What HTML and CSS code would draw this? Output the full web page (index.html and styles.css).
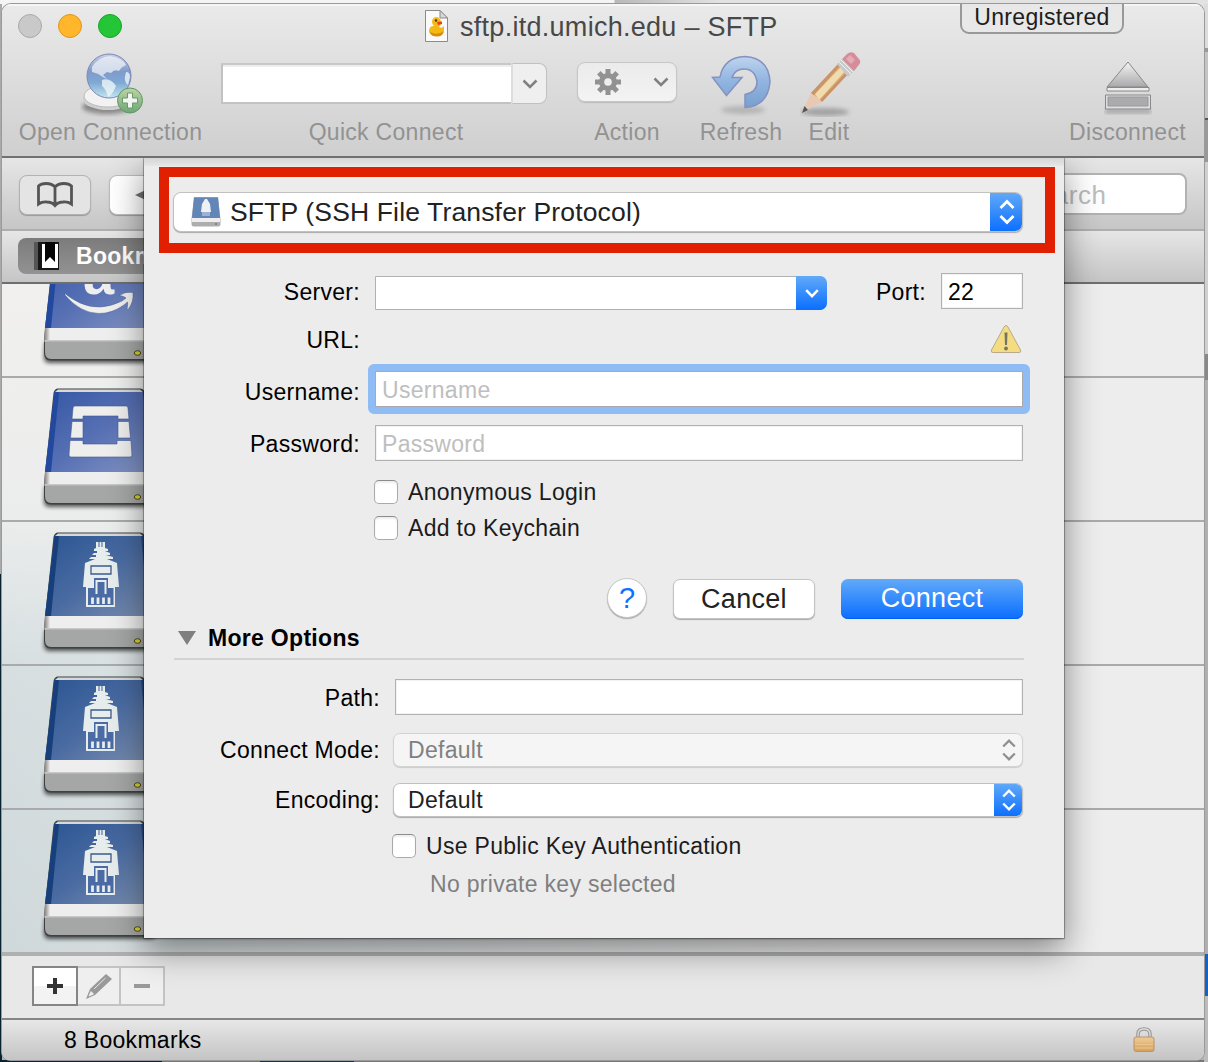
FILE: index.html
```html
<!DOCTYPE html>
<html lang="en">
<head>
<meta charset="utf-8">
<title>sftp.itd.umich.edu – SFTP</title>
<link rel="stylesheet" href="styles.css">
</head>
<body>
<svg class="defs" width="0" height="0">
  <defs>
    <linearGradient id="face" x1="0" y1="0" x2="1" y2="1"><stop offset="0" stop-color="#3457a4"/><stop offset=".5" stop-color="#5770b4"/><stop offset="1" stop-color="#8697c4"/></linearGradient>
    <linearGradient id="faceDeep" x1="0" y1="0" x2="1" y2="1"><stop offset="0" stop-color="#2a5592"/><stop offset=".5" stop-color="#4a6ba2"/><stop offset="1" stop-color="#7d91b0"/></linearGradient>
    <linearGradient id="globe" x1="0" y1="0" x2="0" y2="1"><stop offset="0" stop-color="#c9cfe4"/><stop offset=".4" stop-color="#7f9bcb"/><stop offset=".65" stop-color="#7fa9d3"/><stop offset="1" stop-color="#c3e6f0"/></linearGradient>
    <linearGradient id="green" x1="0" y1="0" x2="0" y2="1"><stop offset="0" stop-color="#bfd3a4"/><stop offset="1" stop-color="#6ea677"/></linearGradient>
    <linearGradient id="blue" x1="0" y1="0" x2="0" y2="1"><stop offset="0" stop-color="#bed4ee"/><stop offset=".45" stop-color="#93b6e2"/><stop offset="1" stop-color="#789fce"/></linearGradient>
    <linearGradient id="metal" x1="0" y1="0" x2="0" y2="1"><stop offset="0" stop-color="#f4f4f4"/><stop offset="1" stop-color="#a9a9ab"/></linearGradient>
    <linearGradient id="gold" x1="0" y1="0" x2="0" y2="1"><stop offset="0" stop-color="#efcb96"/><stop offset="1" stop-color="#d69f5e"/></linearGradient>
    <linearGradient id="band" x1="0" y1="0" x2="1" y2="0"><stop offset="0" stop-color="#85807e"/><stop offset=".5" stop-color="#b9b6b4"/><stop offset="1" stop-color="#ecedec"/></linearGradient>
    <filter id="soft" x="-30%" y="-80%" width="160%" height="260%"><feGaussianBlur stdDeviation="2"/></filter>
    <symbol id="drive-base" viewBox="0 0 120 144">
      <path d="M5 108H116V124Q116 129 110 129H10Q4 129 4 124Z" fill="#000" opacity=".65" filter="url(#soft)"/>
      <path d="M18 10.500H100Q104 10.500 105 15L115 104V120Q115 126.500 109 126.500H11Q4 126.500 4 119V104L13.500 15Q14.500 10.500 18 10.500Z" fill="#3f4243"/>
      <path d="M18 11.500H100L103 14H15Z" fill="#d7d9d8"/>
      <path d="M5 94H113L115 108H4.500Z" fill="#edeeed"/>
      <path d="M5 94H10V106H4.500Z" fill="url(#band)"/>
      <path d="M5 106.500H114V119Q114 125 108 125H11Q5 125 5 118Z" fill="#a5a7a6"/>
      <path d="M5 106.500H114V107.500H5Z" fill="#c4c5c5"/>
      <ellipse cx="97.500" cy="119" rx="3.200" ry="2.300" fill="#dcd12d" stroke="#4b471a"/>
    </symbol>
    <symbol id="plug" viewBox="0 0 120 144">
      <g fill="#e7eced">
        <path d="M56 20H58.500V25H59.500V20H61.500V25H62.500V20H65V26L68 27V29H65L70 31V33H66L73 35V37H67L77 41L79 65H75V85H46V65H43L45 41L55 37H49L51 35H56V33H52L54 31H57V29H54V27L56 26Z"/>
      </g>
      <path d="M51 44H71V52H51Z" fill="none" stroke="#3d5b8e" stroke-width="1.300"/>
      <path d="M48 66H54V56H68V66H73.500V83H48Z" fill="#4a6ba3"/>
      <path d="M56.500 72V59H65.500V72" fill="none" stroke="#e7eced" stroke-width="2"/>
      <path d="M52.500 75.500V82M58 75.500V82M63.500 75.500V82M69 75.500V82" stroke="#e7eced" stroke-width="2.800"/>
    </symbol>
    <symbol id="drive-ssh" viewBox="0 0 120 144">
      <use href="#drive-base"/>
      <path d="M14.500 14H103L112 94H5Z" fill="url(#faceDeep)"/>
      <path d="M14.500 14H19L11 94H5Z" fill="#173f7b"/><path d="M101 14H103L112 94H109Z" fill="#254b86"/>
      <use href="#plug"/>
    </symbol>
  </defs>
</svg>

<div class="window">
  <header class="chrome">
    <div class="titlebar">
      <div class="lights"><i class="light off"></i><i class="light amber"></i><i class="light green"></i></div>
      <div class="title">
        <svg width="24" height="32" viewBox="0 0 24 32"><path d="M.500 .500H15L22.500 8V31.500H.500Z" fill="#fafafa" stroke="#8b8b8b"/><path d="M15 .500V8H22.500Z" fill="#d8d8d8" stroke="#8b8b8b"/><path d="M7 12Q7 7 12 7Q16 8 16 13Q16 15 14 17Q17 19 19 16Q20 26 12 26Q4 26 4 21Q4 16 9 16Q7 14 7 12Z" fill="#f5b915"/><path d="M5 22Q12 26 19 21Q18 26.500 12 26.500Q6 26.500 5 22Z" fill="#d98b0b"/><circle cx="11" cy="10.500" r="1.200" fill="#4a320e"/><path d="M12 12L17 11.500V14L13 15Z" fill="#e5411a"/></svg>
        <span>sftp.itd.umich.edu – SFTP</span>
      </div>
      <div class="badge">Unregistered</div>
    </div>
    <nav class="toolbar">
      <div class="tool open">
        <div class="glyph"><svg width="64" height="64" viewBox="0 0 64 64">
          <ellipse cx="27" cy="54" rx="25" ry="7" fill="#555" opacity=".6" filter="url(#soft)"/>
          <ellipse cx="28" cy="46" rx="25" ry="11" fill="#cfcfcf"/><ellipse cx="28" cy="43" rx="24" ry="11" fill="#f2f2f2" stroke="#bcbcbc"/>
          <circle cx="29" cy="23" r="22" fill="url(#globe)" stroke="#7f86b8"/>
          <path d="M12 14Q18 4 30 3Q43 5 46 12Q41 14 39 18Q34 16 31 20L27 19L23 22L27 26L23 24Q18 20 12 19Z" fill="#eef1f6" opacity=".75"/>
          <path d="M22 27Q30 24 36 33Q34 38 31 42L28 44Q26 36 22 33ZM46 19Q50 19 50 24L48 32Q43 29 46 19Z" fill="#eef5f8" opacity=".8"/>
          <circle cx="50" cy="47.500" r="12.500" fill="url(#green)" stroke="#5e9865"/><path d="M47.500 40H52.500V45H57.500V50H52.500V55H47.500V50H42.500V45H47.500Z" fill="#f2f4f1" stroke="#679c69" stroke-width="1"/>
        </svg></div>
        <span>Open Connection</span>
      </div>
      <div class="tool quick">
        <div class="glyph"><div class="combo"><div class="combo-input"></div><div class="combo-btn"><svg width="16" height="10" viewBox="0 0 16 10"><path d="M1.500 1.500L8 8L14.500 1.500" fill="none" stroke="#818181" stroke-width="2.500"/></svg></div></div></div>
        <span>Quick Connect</span>
      </div>
      <div class="tool action">
        <div class="glyph"><div class="action-btn">
          <svg width="26" height="26" viewBox="-13 -13 26 26"><g fill="#929292"><circle r="9"/><path id="t" d="M-2.500 -13H2.500V13H-2.500Z"/><use href="#t" transform="rotate(45)"/><use href="#t" transform="rotate(90)"/><use href="#t" transform="rotate(135)"/></g><circle r="3.800" fill="#efefef"/></svg>
          <svg width="16" height="10" viewBox="0 0 16 10"><path d="M1.500 1.500L8 8L14.500 1.500" fill="none" stroke="#818181" stroke-width="2.500"/></svg>
        </div></div>
        <span>Action</span>
      </div>
      <div class="tool refresh">
        <div class="glyph"><svg width="60" height="64" viewBox="0 0 60 64"><ellipse cx="32" cy="57" rx="22" ry="4" fill="#777" opacity=".35" filter="url(#soft)"/><path d="M9 24Q13 4 34 3.500Q58 5 59 29Q57 53 34 54.500V41.500Q46 39 46 29Q44 16 33 16Q24 16 21 24.500H31L15.500 42.500L1.500 24.500Z" fill="url(#blue)" stroke="#8591bf" stroke-width="1.500"/></svg></div>
        <span>Refresh</span>
      </div>
      <div class="tool edit">
        <div class="glyph"><svg width="62" height="66" viewBox="0 0 62 66"><ellipse cx="25" cy="61" rx="24" ry="4" fill="#555" opacity=".4" filter="url(#soft)"/><path d="M11 42L39 12L49 22L22 51Z" fill="#deb17a"/><path d="M15 43L42 15L46 19L19 49Z" fill="#f1dcae"/><path d="M11 42L39 12L41 14L13 45ZM20 49L47 20L49 22L22 51Z" fill="#c9946b"/><path d="M11 42L2 61L22 51L19 48L16 46Z" fill="#e8c9b4"/><path d="M4.500 55L2 62L8 59Z" fill="#555"/><path d="M37 13L42 8L54 20L48 26Z" fill="#c9c9c9"/><path d="M39 11L51 23M41 9L53 21" stroke="#f3f3f3"/><path d="M42 8L47 3Q50 0 54 2L59 8Q62 11 58 15L54 20Z" fill="#d58d9b"/><path d="M46 8L50 4L55 9L51 13Z" fill="#e5acb6"/></svg></div>
        <span>Edit</span>
      </div>
      <div class="tool disconnect">
        <div class="glyph"><svg width="48" height="54" viewBox="0 0 48 54"><path d="M1 48H47V52H1Z" fill="#777" opacity=".6" filter="url(#soft)"/><path d="M24 1L44 26H3Z" fill="url(#metal)" stroke="#888"/><path d="M3 26.500H45V30H3Z" fill="#eee" stroke="#888"/><path d="M1.500 34H46.500V48H1.500Z" fill="#dedede" stroke="#888"/><path d="M4 36H44V45H4Z" fill="#ababae" stroke="#999"/></svg></div>
        <span>Disconnect</span>
      </div>
    </nav>
  </header>

  <div class="navbar">
    <div class="book-btn"><svg width="36" height="26" viewBox="0 0 36 26"><path d="M18 5Q15 1.500 9 1.500Q4 1.500 1.500 4V22Q5 19.500 10 20Q15 20 18 23.500Q21 20 26 20Q31 19.500 34.500 22V4Q32 1.500 27 1.500Q21 1.500 18 5ZM18 5V22" fill="none" stroke="#555" stroke-width="2.800"/></svg></div>
    <div class="back-btn"><svg width="14" height="12" viewBox="0 0 14 12"><path d="M0 6L13 0V12Z" fill="#707070"/></svg></div>
    <div class="search">Search</div>
  </div>
  <div class="tabbar">
    <div class="tab"><svg width="26" height="28" viewBox="0 0 26 28"><path d="M2 0H25V28H2Z" fill="#171717"/><path d="M8 2H24V26H8Z" fill="#fff"/><path d="M11 0H21V20L16 15L11 20Z" fill="#050505"/><path d="M0 0H4V28H0Z" fill="#555"/></svg><b>Bookmarks</b></div>
  </div>

  <main class="list">
    <div class="row clipped"><svg width="120" height="142" viewBox="0 0 120 142"><use href="#drive-base" width="120" height="144"/><path d="M14.500 14H103L112 94H5Z" fill="url(#face)"/><path d="M14.500 14H19L11 94H5Z" fill="#2348a0"/><text x="43" y="60" class="drive-letter">a</text><path d="M25 59.500Q30 64 40 69Q60 78 82 67L86 64Q84 62 79 61.500Q86 57 93 58.500Q94 68 88 75.500L87 75Q88 70 87.500 68L84 71Q72 79.500 59 79.500Q40 79 25 61Z" fill="#f0efec" stroke="#47609d" stroke-width=".5"/></svg></div>
    <div class="row"><svg width="120" height="142" viewBox="0 0 120 142"><use href="#drive-base" width="120" height="144"/><path d="M14.500 14H103L112 94H5Z" fill="url(#face)"/><path d="M14.500 14H19L11 94H5Z" fill="#2348a0"/><path d="M35 28H86Q88 28 88 30L89 41H78V38H43V41H32L33 30Q33 28 35 28ZM32 43.500H43V60H30.500ZM78 43.500H89L90.500 60H78ZM30 62.500H43V66H77V62.500H91L92 77Q92 79 90 79H31Q29 79 29 77Z" fill="#eeeeed" stroke="#405794" stroke-width=".6"/></svg></div>
    <div class="row"><svg width="120" height="142" viewBox="0 0 120 142"><use href="#drive-ssh" width="120" height="144"/></svg></div>
    <div class="row"><svg width="120" height="142" viewBox="0 0 120 142"><use href="#drive-ssh" width="120" height="144"/></svg></div>
    <div class="row last"><svg width="120" height="142" viewBox="0 0 120 142"><use href="#drive-ssh" width="120" height="144"/></svg></div>
  </main>

  <div class="actions">
    <div class="act add"><svg width="16" height="16" viewBox="0 0 16 16"><path d="M6 0H10V6H16V10H10V16H6V10H0V6H6Z" fill="#333"/></svg></div>
    <div class="act pen"><svg width="26" height="25" viewBox="0 0 26 25"><path d="M20 0L26 5L9 21L0 25L4 15Z" fill="#999"/><path d="M19.500 4L8 15M3 22L5 17.500L7.500 20Z" stroke="#eee" fill="#eee" stroke-width=".9"/></svg></div>
    <div class="act minus"><svg width="16" height="4" viewBox="0 0 16 4"><path d="M0 0H16V4H0Z" fill="#999"/></svg></div>
  </div>
  <footer class="status"><span>8 Bookmarks</span>
    <svg width="22" height="26" viewBox="0 0 22 26"><path d="M5 11V7Q5 2 11 2Q17 2 17 7V11" fill="none" stroke="#999" stroke-width="3.600"/><path d="M5 11V7Q5 2 11 2Q17 2 17 7V11" fill="none" stroke="#ddd" stroke-width="1.300"/><rect x="1" y="10" width="20" height="14.500" rx="2" fill="url(#gold)" stroke="#bb9468"/><path d="M2 14H20M2 17.500H20M2 21H20" stroke="#e9c58a"/></svg>
  </footer>

  <section class="sheet">
    <div class="highlight">
      <div class="select protocol">
        <svg width="30" height="30" viewBox="0 0 30 30"><path d="M3 0H27L29.500 22V27Q29.500 29.500 27 29.500H3Q.500 29.500 .500 27V22Z" fill="#adadad"/><path d="M3 .500H27L29 21H1Z" fill="#6386b9"/><path d="M1 21H29V25H1Z" fill="#eee"/><path d="M14 2H16L19 7L20 15H10L11 7Z" fill="#edf1f6"/><path d="M11 15H19V19H11Z" fill="#9db1d0"/><circle cx="25" cy="27" r="1" fill="#777"/></svg>
        <span>SFTP (SSH File Transfer Protocol)</span>
        <i class="stepper"><svg width="16" height="26" viewBox="0 0 16 26"><path d="M1.500 9L8 2.500L14.500 9M1.500 17L8 23.500L14.500 17" fill="none" stroke="#fff" stroke-width="2.800"/></svg></i>
      </div>
    </div>
    <div class="field server"><label>Server:</label>
      <div class="server-box"><i class="drop"><svg width="14" height="9" viewBox="0 0 14 9"><path d="M1.200 1.200L7 7.200L12.800 1.200" fill="none" stroke="#fff" stroke-width="2.500"/></svg></i></div>
      <label class="port-label">Port:</label><div class="box port">22</div></div>
    <div class="field url"><label>URL:</label>
      <svg class="warn" width="32" height="30" viewBox="0 0 32 30"><path d="M16 1.500Q17 1.500 18 3L30.500 26Q31.500 28.500 29 28.500H3Q.500 28.500 1.500 26L14 3Q15 1.500 16 1.500Z" fill="#f4dc83" stroke="#b7a98a"/><path d="M14.500 8.500H17.500L17 21H15Z" fill="#777461"/><circle cx="16" cy="24.500" r="1.900" fill="#777461"/></svg></div>
    <div class="field user"><label>Username:</label><div class="box hint focus">Username</div></div>
    <div class="field pass"><label>Password:</label><div class="box hint">Password</div></div>
    <div class="check anon"><i></i>Anonymous Login</div>
    <div class="check chain"><i></i>Add to Keychain</div>
    <div class="buttons"><div class="help">?</div><div class="btn cancel">Cancel</div><div class="btn connect">Connect</div></div>
    <div class="more"><svg width="18" height="14" viewBox="0 0 18 14"><path d="M0 0H18L9 14Z" fill="#7f7f7f"/></svg><b>More Options</b></div>
    <div class="field wide path"><label>Path:</label><div class="box"></div></div>
    <div class="field wide mode"><label>Connect Mode:</label><div class="select small disabled"><span>Default</span><i class="stepper"><svg width="14" height="22" viewBox="0 0 14 22"><path d="M1.200 7.500L7 1.700L12.800 7.500M1.200 14.500L7 20.300L12.800 14.500" fill="none" stroke="#909090" stroke-width="2.300"/></svg></i></div></div>
    <div class="field wide enc"><label>Encoding:</label><div class="select small"><span>Default</span><i class="stepper"><svg width="14" height="22" viewBox="0 0 14 22"><path d="M1.200 7.500L7 1.700L12.800 7.500M1.200 14.500L7 20.300L12.800 14.500" fill="none" stroke="#fff" stroke-width="2.400"/></svg></i></div></div>
    <div class="check pubkey"><i></i>Use Public Key Authentication</div>
    <div class="note">No private key selected</div>
  </section>
</div>
</body>
</html>
```
FILE: styles.css
```css
* { box-sizing: border-box; }
body {
  margin: 0; width: 1208px; height: 1062px; overflow: hidden; padding: 4px 4px 2px 2px;
  font: 23px/26px "Liberation Sans", Arial, sans-serif; letter-spacing: .3px; color: #000;
  background:
    linear-gradient(#06232f, #06232f) 0 1060px / 162px 2px no-repeat,
    linear-gradient(#1f2d57, #1f2d57) 260px 1060px / 94px 2px no-repeat,
    linear-gradient(#777, #777) 0 1060px / 1204px 2px no-repeat,
    linear-gradient(#aaa 0 570px, #06232f 570px) 0 4px / 2px 1056px no-repeat,
    linear-gradient(#dcdcdc 0 44px, #999 44px 48px, #c4c4c4 48px 114px, #555 114px 116px, #999 116px 158px, #d0d0d0 158px 350px, #888 350px 376px, #b0b0b0 376px 950px, #1262c8 950px 992px, #bcbcbc 992px) 1204px 4px / 4px 1058px no-repeat,
    linear-gradient(90deg, #f4f4f4 0 614px, #b9b9b9 615px, #e2e2e2 720px) 0 0 / 1208px 14px no-repeat,
    #b4b4b4;
}
svg { display: block; flex: none; }
.defs { position: absolute; }
.window { position: relative; width: 1202px; height: 1056px; border-radius: 9px 9px 8px 8px; overflow: hidden; background: #e8e8e8; display: flex; flex-direction: column; box-shadow: 0 0 0 1px #9a9a9a; }

.chrome { height: 154px; border-bottom: 2px solid #707070; background: linear-gradient(#eaeaea, #cfcfcf); box-shadow: inset 0 2px #f6f6f6; }
.titlebar { position: relative; height: 46px; display: flex; align-items: center; }
.lights { display: flex; gap: 16px; padding-left: 16px; width: 423px; margin-top: -2px; }
.light { width: 24px; height: 24px; border-radius: 50%; border: 1px solid; }
.light.off { background: #c9c9c9; border-color: #a9a9a9; }
.light.amber { background: #ffb62a; border-color: #df961c; }
.light.green { background: #24c638; border-color: #17a428; }
.title { display: flex; align-items: center; gap: 11px; font-size: 27px; letter-spacing: .28px; color: #484848; white-space: nowrap; }
.title svg { margin-top: -2px; }
.badge { position: absolute; left: 958px; top: -2px; width: 164px; height: 32px; border: 2px solid #999; border-radius: 0 0 9px 9px; background: #e8e8e8; color: #1d1d1d; text-align: center; line-height: 26px; }

.toolbar { display: flex; padding: 0 17px; color: #929292; }
.tool { display: flex; flex-direction: column; align-items: center; white-space: nowrap; }
.glyph { height: 69px; display: flex; align-items: flex-start; justify-content: center; }
.open { width: 183px; margin-right: 19px; }
.open .glyph { padding: 3px 0 0 2px; }
.quick { width: 326px; margin-right: 30px; }
.quick span { padding-left: 4px; }
.quick .glyph, .action .glyph { padding-top: 13px; }
.action { width: 100px; margin-right: 24px; }
.action .glyph { padding-top: 12px; }
.refresh { width: 80px; margin-right: 18px; }
.refresh .glyph { padding-top: 3px; }
.edit { width: 60px; }
.edit .glyph { padding: 1px 0 0 3px; }
.disconnect { width: 119px; margin-left: auto; }
.disconnect .glyph { padding-top: 11px; }
.combo { display: flex; width: 326px; height: 41px; }
.combo-input { width: 290px; background: #fff; border: 2px solid #c2c2c2; border-top-color: #c8c8c8; border-right: 0; box-shadow: inset 0 2px #eee; }
.combo-btn { width: 36px; background: #efefef; border: 1px solid #c0c0c0; border-left: 2px solid #ddd; border-radius: 0 8px 8px 0; display: grid; place-items: center; }
.action-btn { width: 100px; height: 40px; border: 1px solid #c6c6c6; border-radius: 8px; background: linear-gradient(#ebebeb, #f3f3f3); box-shadow: 0 1px 1px #bbb; display: flex; align-items: center; justify-content: space-between; padding: 0 7px 0 17px; }

.navbar { height: 73px; border-bottom: 2px solid #aeaeae; background: linear-gradient(#e6e6e6, #c6c6c6); display: flex; padding: 17px 17px 0; }
.book-btn { width: 72px; height: 40px; border-radius: 8px; border: 1px solid #b3b3b3; background: #e4e4e4; box-shadow: 0 1px 1px #999; display: grid; place-items: center; }
.back-btn { width: 90px; height: 40px; margin-left: 18px; border-radius: 8px; border: 1px solid #bbb; background: #fff; box-shadow: 0 1px 1px #999; padding: 13px 0 0 25px; }
.search { margin: -2px 0 0 auto; width: 230px; height: 42px; border: 2px solid #b2b2b2; border-radius: 8px; background: #fff; color: #bcbcbc; font-size: 26px; line-height: 40px; padding-left: 62px; letter-spacing: .5px; }
.tabbar { height: 53px; border-bottom: 2px solid #6e6e6e; background: linear-gradient(#e6e6e6, #c5c5c5); padding: 7px 16px; }
.tab { width: 230px; height: 36px; border-radius: 8px; background: linear-gradient(#7c7c7c, #929292); color: #fff; display: flex; align-items: center; padding-left: 16px; gap: 16px; }

.list { height: 668px; background: linear-gradient(90deg, rgba(237,237,237,0), #ededed 70%), linear-gradient(#f1f0ee 0, #ebedec 35%, #d6dee0 58%, #cfd8da); }
.row { height: 144px; padding-left: 38px; border-bottom: 2px solid #a9abab; overflow: hidden; }
.row.clipped { height: 94px; display: flex; align-items: flex-end; }
.row.last { height: 142px; border: 0; }
.drive-letter { font: bold 56px "Liberation Sans", Arial, sans-serif; fill: #efeeee; }

.actions { height: 68px; border-top: 4px solid #b0b0b0; border-bottom: 2px solid #858585; background: #e8e8e8; display: flex; padding: 10px 30px; }
.act { height: 40px; border: 2px solid #c3c3c3; background: #efefef; display: grid; place-items: center; width: 46px; margin-left: -2px; }
.act.add { margin-left: 0; border-color: #858585; background: linear-gradient(#fff 50%, #f3f3f3 50%); z-index: 1; }
.act.pen { width: 45px; }
.act.minus { width: 46px; }
.status { height: 40px; flex: none; background: linear-gradient(#e7e7e7, #c4c4c4); display: flex; justify-content: space-between; align-items: center; padding: 0 49px 0 62px; }

.sheet { position: absolute; left: 142px; top: 154px; width: 920px; height: 780px; padding-top: 9px; background: #ececec; box-shadow: 0 0 0 1px rgba(0,0,0,.22), 0 1px 2px rgba(0,0,0,.35), 0 12px 32px rgba(0,0,0,.45); clip-path: inset(0 -60px -60px -60px); }
.sheet::before { content: ""; position: absolute; inset: 0 0 auto; height: 8px; background: linear-gradient(#d5d5d5, #e6e6e6); }
.highlight { position: relative; margin-left: 15px; width: 896px; height: 86px; border: 10px solid #e02000; background: #ececec; padding: 15px 22px 11px 4px; }
.select { position: relative; display: flex; align-items: center; height: 40px; border: 1px solid #c1c1c1; border-radius: 8px; background: #fff; box-shadow: 0 1px 1px #aaa; color: #222; overflow: hidden; }
.protocol { font-size: 26.5px; letter-spacing: .15px; padding-left: 17px; gap: 9px; }
.stepper { align-self: stretch; width: 33px; margin: -1px -1px -1px auto; background: linear-gradient(#62aaf9, #0a6eff); display: grid; place-items: center; }
.small { height: 34px; width: 630px; padding-left: 14px; border-radius: 7px; }
.small .stepper { width: 29px; }
.disabled { background: #f5f5f5; color: #808080; border-color: #d3d3d3; box-shadow: 0 1px 1px #ccc; }
.disabled .stepper { background: none; }

.field { display: flex; height: 36px; }
.field > label { width: 216px; text-align: right; line-height: 38px; margin-right: 15px; flex: none; }
.wide > label { width: 236px; margin-right: 15px; }
.box { width: 648px; height: 36px; border: 1px solid #b1b1b1; background: #fff; line-height: 35px; padding-left: 6px; box-shadow: inset 0 0 0 1px #f2f2f2; }
.hint { color: #bebebe; }
.focus { border-color: #aaa; box-shadow: 0 0 0 7px #8fbcf4; position: relative; }
.focus::before { content: ""; position: absolute; inset: -8px; border: 7px solid #8fbcf4; border-radius: 6px; }
.focus { box-shadow: none; }
.server { margin-top: 20px; }
.server-box { display: flex; justify-content: flex-end; width: 452px; height: 34px; margin-top: 3px; background: #fff; border: 1px solid #b1b1b1; border-radius: 0 8px 8px 0; }
.drop { width: 31px; margin: -1px; border-radius: 0 7px 7px 0; background: linear-gradient(#62aaf9, #0a6eff); display: grid; place-items: center; }
.server > .port-label { width: 99px; }
.box.port { width: 82px; line-height: 36px; }
.url { margin-top: 14px; height: 32px; }
.url label { line-height: 34px; }
.warn { margin: 1px 0 0 615px; }
.user { margin-top: 16px; }
.user label { line-height: 42px; }
.user .box { line-height: 36px; }
.pass { margin-top: 18px; }
.pass .box { line-height: 36px; }
.path .box { width: 628px; }
.check { display: flex; align-items: center; height: 24px; margin-left: 230px; gap: 10px; color: #1c1c1c; }
.check i { width: 24px; height: 24px; border-radius: 5px; border: 1px solid #aaa; border-top-color: #8c8c8c; background: #fff; box-shadow: inset 0 2px 2px #eee; }
.anon { margin-top: 19px; }
.chain { margin-top: 12px; }
.buttons { display: flex; margin: 38px 0 0 463px; height: 41px; }
.help { width: 40px; height: 40px; border-radius: 50%; background: #fff; border: 1px solid #c8c8c8; box-shadow: 0 1px 1px #aaa; color: #0a72ff; font-size: 29px; line-height: 38px; text-align: center; letter-spacing: 0; }
.btn { height: 40px; margin-top: 1px; border-radius: 7px; font-size: 27px; line-height: 39px; text-align: center; }
.cancel { width: 142px; margin-left: 26px; background: #fff; border: 1px solid #c3c3c3; box-shadow: 0 1px 1px #aaa; color: #222; line-height: 38px; }
.connect { width: 182px; margin-left: 26px; background: linear-gradient(#62aaf9, #0a6eff); box-shadow: inset 0 -1px #0060ef; color: #fff; }
.more { display: flex; align-items: center; gap: 12px; width: 850px; height: 42px; margin: -1px 0 0 30px; padding-left: 4px; border-bottom: 2px solid #d3d3d3; }
.path { margin-top: 19px; }
.mode { margin-top: 18px; height: 34px; }
.enc { margin-top: 16px; height: 34px; }
.mode label, .enc label { line-height: 35px; margin-right: 13px; }
.pubkey { margin: 17px 0 0 248px; }
.note { margin: 13px 0 0 286px; color: #7f7f7f; }
```
